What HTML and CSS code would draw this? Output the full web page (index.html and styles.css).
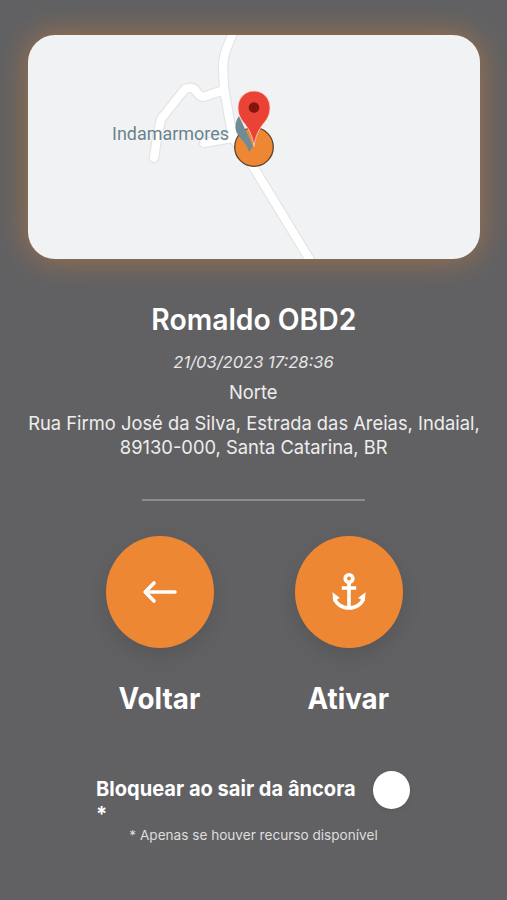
FILE: index.html
```html
<!DOCTYPE html>
<html lang="pt-BR">
  <head>
    <meta charset="UTF-8" />
    <meta name="viewport" content="width=device-width, initial-scale=1.0" />
    <title>Âncora</title>
    <link rel="stylesheet" href="styles.css">
  </head>
  <body>
    <!-- Mapa -->
    <div class="map">
      <svg viewBox="28 35 452 224">
        <g class="road-border">
          <path d="M234 30 L226 50 Q223 58 223 68 L224 88 L229 117 L233 138 L254 168 L313 265" />
          <path d="M224 90 L203 97 Q200 97 196 91 Q193 86 185 89 L161 119 L157 138 L154 158" />
          <path d="M232 138 L204 143" />
        </g>
        <g class="road">
          <path d="M234 30 L226 50 Q223 58 223 68 L224 88 L229 117 L233 138 L254 168 L313 265" />
          <path d="M224 90 L203 97 Q200 97 196 91 Q193 86 185 89 L161 119 L157 138 L154 158" />
          <path d="M232 138 L204 143" />
        </g>
        <text class="place" x="112" y="139.500" textLength="117" lengthAdjust="spacingAndGlyphs">Indamarmores</text>
        <circle class="anchor-area" cx="254" cy="147" r="19.300" />
        <path class="place-pin" d="M239 116 Q234 123 236 131 Q238 136 243 141 Q247 145 249 152 L253 146 Z" />
        <path class="pin" d="M254 146.500 C252.500 136 249.500 130 244 123 C240 118 238 114 238 107.500 C238 98 245 91 254 91 C263 91 270 98 270 107.500 C270 114 268 118 264 123 C258.500 130 255.500 136 254 146.500 Z" />
        <circle class="pin-dot" cx="254" cy="107.500" r="5.300" />
      </svg>
    </div>

    <!-- Dados do veículo -->
    <div class="info">
      <h1><span>Romaldo OBD2</span></h1>
      <p class="date"><span>21/03/2023 17:28:36</span></p>
      <p class="direction"><span>Norte</span></p>
      <p class="address">
        <span>Rua Firmo José da Silva, Estrada das Areias, Indaial,</span><br />
        <span>89130-000, Santa Catarina, BR</span>
      </p>
    </div>

    <hr />

    <!-- Botões -->
    <div class="actions">
      <div class="action">
        <button type="button" aria-label="Voltar">
          <svg width="36" height="26" viewBox="0 0 36 26">
            <path class="arrow" d="M12 4 L3.200 13 L12 22 M3.500 13 H33" />
          </svg>
        </button>
        <h2><span>Voltar</span></h2>
      </div>
      <div class="action">
        <button type="button" aria-label="Ativar">
          <svg width="36" height="40" viewBox="0 0 36 40">
            <circle class="anchor" cx="18" cy="6.500" r="3.800" />
            <path class="anchor" d="M18 10.500 V36 M10.800 16 H25.200" />
            <path class="anchor" d="M3.500 25.500 C4.500 31.500 10.500 36 18 36 C25.500 36 31.500 31.500 32.500 25.500" />
            <path class="fluke" d="M1.500 20.300 L8.900 26 L2.200 29.500 Z M34.500 20.300 L27.100 26 L33.800 29.500 Z" />
          </svg>
        </button>
        <h2><span>Ativar</span></h2>
      </div>
    </div>

    <!-- Bloqueio -->
    <div class="block">
      <div class="block-label"><span>Bloquear ao sair da âncora</span><br /><span>*</span></div>
      <div class="switch"><div class="knob"></div></div>
    </div>
    <p class="note"><span>* Apenas se houver recurso disponível</span></p>
  </body>
</html>
```

FILE: styles.css
```css
body {
  margin: 0;
  padding-top: 35px;
  height: 865px;
  background: #616163;
  color: #fff;
  font-family: Inter, "Liberation Sans", sans-serif;
  text-align: center;
  overflow: hidden;
}

h1,
h2,
p {
  margin: 0;
}

h1 span,
h2 span,
p span,
.block-label span {
  display: inline-block;
  white-space: nowrap;
}

/* Mapa */
.map {
  width: 452px;
  height: 224px;
  margin: 0 27px 0 28px;
  border-radius: 27px;
  overflow: hidden;
  background: #f0f2f3;
  box-shadow: 0 0 28px 2px rgba(238, 135, 51, 0.42);
}

.map svg {
  display: block;
}

.road-border path,
.road path {
  fill: none;
  stroke: #e1e3e4;
  stroke-width: 10.5;
  stroke-linecap: round;
  stroke-linejoin: round;
}

.road path {
  stroke: #fff;
  stroke-width: 8.3;
}

.place {
  font-family: Roboto, sans-serif;
  font-size: 18.5px;
  fill: #6a828b;
  stroke: #f5f7f8;
  stroke-width: 1px;
  paint-order: stroke;
}

.anchor-area {
  fill: #ee8733;
  stroke: #5a412c;
  stroke-width: 1.3;
}

.place-pin {
  fill: #6f8c96;
}

.pin {
  fill: #ea4335;
  stroke: #f6d9d0;
  stroke-width: 0.8;
}

.pin-dot {
  fill: #84140f;
}

/* Dados */
.info {
  padding-top: 40px;
}

h1 {
  font-size: 29.5px;
  font-weight: 600;
  line-height: 41px;
}

h1 span {
  transform: scaleX(0.96);
}

.date {
  margin-top: 12px;
  font-size: 16.5px;
  font-style: italic;
  line-height: 21px;
  color: #e8e8e8;
}

.direction {
  margin-top: 8px;
  font-size: 19px;
  line-height: 24px;
  color: #ededed;
}

.direction span,
.address span {
  transform: scaleX(0.965);
}

.address {
  margin: 7px -10px 0;
  font-size: 19px;
  line-height: 24px;
  color: #ededed;
}

hr {
  width: 223px;
  height: 2px;
  margin: 39px auto 0;
  border: none;
  background: #8c8c8e;
}

/* Botões */
.actions {
  display: flex;
  justify-content: center;
  gap: 81px;
  margin-top: 35px;
  padding-left: 1px;
}

.action {
  width: 108px;
}

button {
  display: flex;
  align-items: center;
  justify-content: center;
  width: 108px;
  height: 112px;
  padding: 0;
  border: none;
  border-radius: 50%;
  background: #ee8733;
  box-shadow: 0 8px 20px rgba(0, 0, 0, 0.11);
}

.arrow {
  fill: none;
  stroke: #fff;
  stroke-width: 3.6;
  stroke-linecap: round;
  stroke-linejoin: round;
}

.anchor {
  fill: none;
  stroke: #fff;
  stroke-width: 3.6;
}

.fluke {
  fill: #fff;
}

h2 {
  margin-top: 30px;
  font-size: 29.5px;
  font-weight: 700;
  line-height: 40px;
}

h2 span {
  transform: scaleX(0.94);
}

/* Bloqueio */
.block {
  display: flex;
  justify-content: space-between;
  width: 314px;
  margin: 53px auto 0 96px;
}

.block-label {
  margin-top: 5px;
  font-size: 20.7px;
  font-weight: 700;
  line-height: 25px;
  text-align: left;
}

.block-label span {
  transform: scaleX(0.97);
  transform-origin: left;
}

.knob {
  width: 37px;
  height: 38px;
  border-radius: 50%;
  background: #fff;
  box-shadow: 0 1px 4px rgba(0, 0, 0, 0.1);
}

.note {
  margin-top: -2px;
  font-size: 13.6px;
  line-height: 22px;
  color: #dedede;
}
```
